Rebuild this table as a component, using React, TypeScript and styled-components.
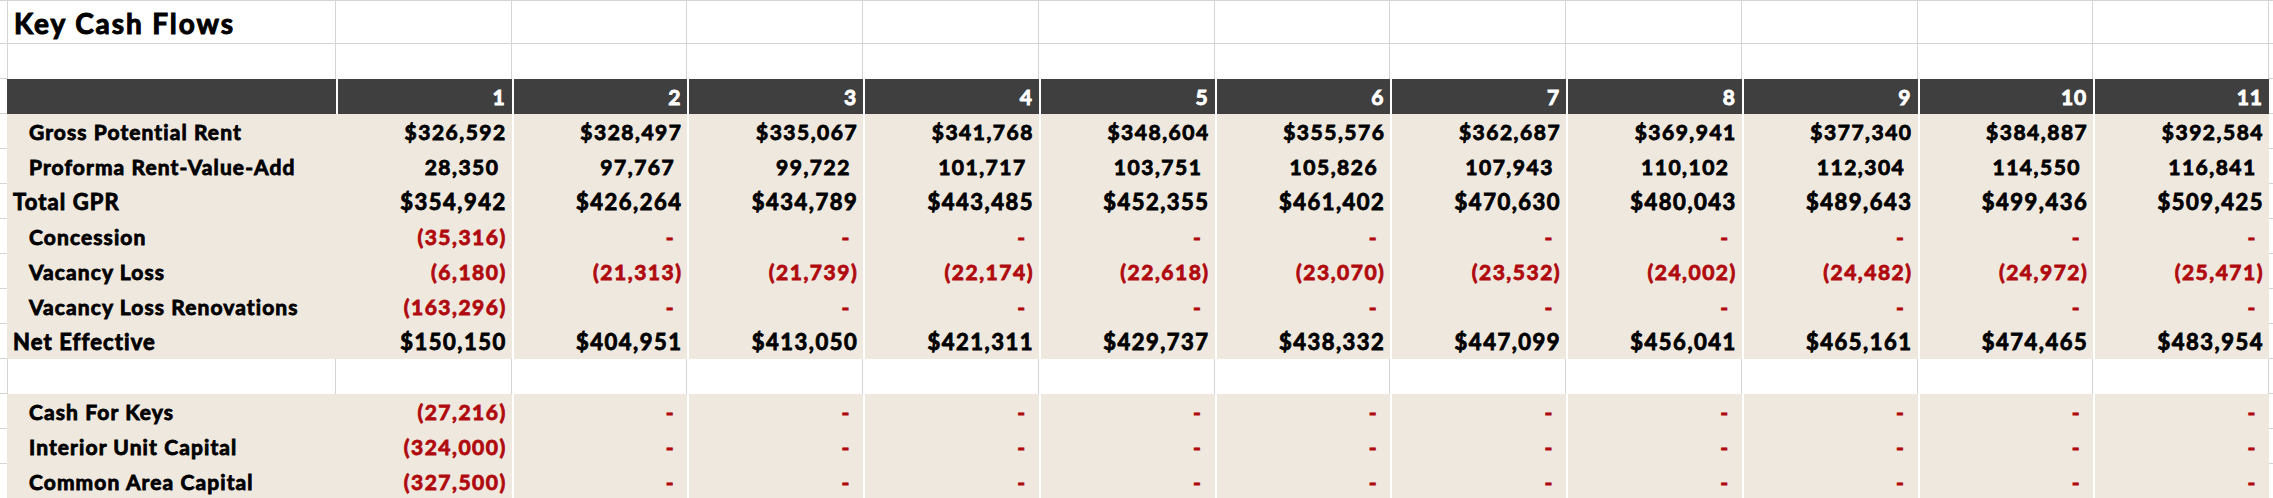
import styled, { createGlobalStyle } from 'styled-components';

type Kind = 'item' | 'total';

interface FlowRow {
  label: string;
  kind: Kind;
  negative?: boolean;
  values: string[];
}

const dashes = (first: string) => [first, ...Array(10).fill('-')];

const topRows: FlowRow[] = [
  {
    label: 'Gross Potential Rent',
    kind: 'item',
    values: ['$326,592', '$328,497', '$335,067', '$341,768', '$348,604', '$355,576', '$362,687', '$369,941', '$377,340', '$384,887', '$392,584'],
  },
  {
    label: 'Proforma Rent-Value-Add',
    kind: 'item',
    values: ['28,350', '97,767', '99,722', '101,717', '103,751', '105,826', '107,943', '110,102', '112,304', '114,550', '116,841'],
  },
  {
    label: 'Total GPR',
    kind: 'total',
    values: ['$354,942', '$426,264', '$434,789', '$443,485', '$452,355', '$461,402', '$470,630', '$480,043', '$489,643', '$499,436', '$509,425'],
  },
  { label: 'Concession', kind: 'item', negative: true, values: dashes('(35,316)') },
  {
    label: 'Vacancy Loss',
    kind: 'item',
    negative: true,
    values: ['(6,180)', '(21,313)', '(21,739)', '(22,174)', '(22,618)', '(23,070)', '(23,532)', '(24,002)', '(24,482)', '(24,972)', '(25,471)'],
  },
  { label: 'Vacancy Loss Renovations', kind: 'item', negative: true, values: dashes('(163,296)') },
  {
    label: 'Net Effective',
    kind: 'total',
    values: ['$150,150', '$404,951', '$413,050', '$421,311', '$429,737', '$438,332', '$447,099', '$456,041', '$465,161', '$474,465', '$483,954'],
  },
];

const capitalRows: FlowRow[] = [
  { label: 'Cash For Keys', kind: 'item', negative: true, values: dashes('(27,216)') },
  { label: 'Interior Unit Capital', kind: 'item', negative: true, values: dashes('(324,000)') },
  { label: 'Common Area Capital', kind: 'item', negative: true, values: dashes('(327,500)') },
];

const periods = Array.from({ length: 11 }, (_, i) => String(i + 1));

// plain numbers and dashes leave room for a closing bracket, like Excel's accounting format
const needsTrail = (v: string) => !v.startsWith('$') && !v.startsWith('(');

const ValueText = ({ value }: { value: string }) => (
  <>
    {value}
    {needsTrail(value) && <Trail>)</Trail>}
  </>
);

const DataRow = ({ row }: { row: FlowRow }) => (
  <Row $height={35}>
    <Gutter />
    <Label $kind={row.kind}>{row.label}</Label>
    {row.values.map((v, i) => (
      <Value key={i} $first={i === 0} $kind={row.kind} $negative={row.negative}>
        <ValueText value={v} />
      </Value>
    ))}
    <Gutter />
  </Row>
);

const BlankRow = ({ height, lined }: { height: number; lined?: boolean }) => (
  <Row $height={height}>
    <Gutter />
    <WhiteCell $lined={lined} $edge />
    {periods.map((p) => (
      <WhiteCell key={p} $lined={lined} />
    ))}
    <Gutter />
  </Row>
);

export default function App() {
  return (
    <>
      <GlobalStyle />
      <Sheet>
        <TopLine />
        <Row $height={43}>
          <Gutter />
          <WhiteCell $lined $edge>
            <Title>Key Cash Flows</Title>
          </WhiteCell>
          {periods.map((p) => (
            <WhiteCell key={p} $lined />
          ))}
          <Gutter />
        </Row>
        <BlankRow height={35} />
        <Row $height={35}>
          <Gutter />
          <HeaderCell $label />
          {periods.map((p) => (
            <HeaderCell key={p}>{p}</HeaderCell>
          ))}
          <Gutter />
        </Row>
        {topRows.map((r) => (
          <DataRow key={r.label} row={r} />
        ))}
        <BlankRow height={35} />
        {capitalRows.map((r) => (
          <DataRow key={r.label} row={r} />
        ))}
      </Sheet>
    </>
  );
}

const GlobalStyle = createGlobalStyle`
  html, body {
    margin: 0;
    padding: 0;
    background: #ffffff;
    overflow: hidden;
  }
  body {
    font-family: Lato, "Open Sans", "Noto Sans", sans-serif;
    font-weight: 700;
    color: #000000;
  }
`;

const Sheet = styled.div`
  width: 2273px;
  height: 498px;
  overflow: hidden;
  display: flex;
  flex-direction: column;
`;

const TopLine = styled.div`
  height: 2px;
  border-bottom: 1px solid #d4d4d4;
  box-sizing: border-box;
`;

const Row = styled.div<{ $height: number }>`
  display: grid;
  grid-template-columns: 7px 329px repeat(11, 1fr) 4px;
  height: ${({ $height }) => $height}px;
  flex-shrink: 0;
`;

const Gutter = styled.div`
  border-bottom: 1px solid #d4d4d4;
  box-sizing: border-box;
  background: #ffffff;
`;

const WhiteCell = styled.div<{ $lined?: boolean; $edge?: boolean }>`
  box-sizing: border-box;
  background: #ffffff;
  border-right: 1px solid #d4d4d4;
  border-left: ${({ $edge }) => ($edge ? '1px solid #d4d4d4' : 'none')};
  border-bottom: ${({ $lined }) => ($lined ? '1px solid #d4d4d4' : 'none')};
  display: flex;
  align-items: center;
  overflow: visible;
  white-space: nowrap;
`;

const Title = styled.span`
  font-size: 28px;
  letter-spacing: 1.9px;
  -webkit-text-stroke: 1px #000000;
  padding-left: 6px;
  margin-top: 2px;
`;

const HeaderCell = styled.div<{ $label?: boolean }>`
  box-sizing: border-box;
  background: #3f3f3f;
  color: #ffffff;
  border-left: 2px solid #ffffff;
  border-left-width: ${({ $label }) => ($label ? '0' : '2px')};
  display: flex;
  align-items: center;
  justify-content: flex-end;
  padding-right: 6px;
  font-size: 21px;
  letter-spacing: 1px;
  -webkit-text-stroke: 0.9px #ffffff;
`;

const Label = styled.div<{ $kind: Kind }>`
  box-sizing: border-box;
  background: #efe8de;
  display: flex;
  align-items: center;
  white-space: nowrap;
  padding-left: ${({ $kind }) => ($kind === 'total' ? '6px' : '22px')};
  font-size: ${({ $kind }) => ($kind === 'total' ? '22px' : '21px')};
  letter-spacing: 1.1px;
  -webkit-text-stroke: 0.85px #000000;
`;

const Value = styled.div<{ $first: boolean; $kind: Kind; $negative?: boolean }>`
  box-sizing: border-box;
  background: #efe8de;
  border-left: ${({ $first }) => ($first ? 'none' : '2px solid #ffffff')};
  display: flex;
  align-items: center;
  justify-content: flex-end;
  padding-right: 5px;
  white-space: nowrap;
  font-size: ${({ $kind }) => ($kind === 'total' ? '22px' : '21px')};
  letter-spacing: 1.5px;
  color: ${({ $negative }) => ($negative ? '#b00a0e' : '#000000')};
  -webkit-text-stroke: 0.85px ${({ $negative }) => ($negative ? '#b00a0e' : '#000000')};
`;

const Trail = styled.span`
  visibility: hidden;
`;
